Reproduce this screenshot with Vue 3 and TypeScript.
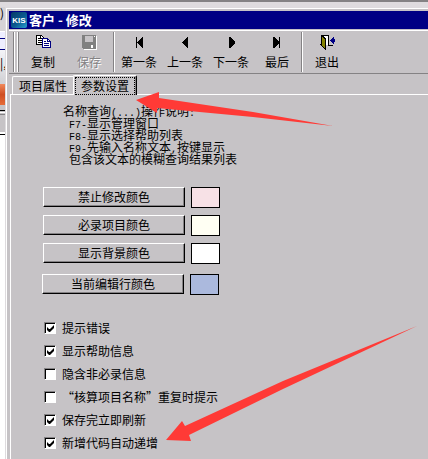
<script setup lang="ts">
import { ref } from 'vue'

interface Tool {
  id: string
  label: string
  disabled?: boolean
}

const toolGroups: Tool[][] = [
  [
    { id: 'copy', label: '复制' },
    { id: 'save', label: '保存', disabled: true },
  ],
  [
    { id: 'first', label: '第一条' },
    { id: 'prev', label: '上一条' },
    { id: 'next', label: '下一条' },
    { id: 'last', label: '最后' },
  ],
  [{ id: 'exit', label: '退出' }],
]

const tabs = ['项目属性', '参数设置']
const activeTab = ref(1)

const colors = [
  { label: '禁止修改颜色', value: '#f7e1e6' },
  { label: '必录项目颜色', value: '#fffff3' },
  { label: '显示背景颜色', value: '#ffffff' },
  { label: '当前编辑行颜色', value: '#abb9dd' },
]

const options = ref([
  { label: '提示错误', checked: true },
  { label: '显示帮助信息', checked: true },
  { label: '隐含非必录信息', checked: false },
  { label: '“核算项目名称”重复时提示', checked: false },
  { label: '保存完立即刷新', checked: true },
  { label: '新增代码自动递增', checked: true },
])
</script>

<template>
  <div class="desktop">
    <div class="owner-edge"></div>
    <div class="owner-side" aria-hidden="true">
      <div class="side-title">)</div>
      <div class="side-menu"></div>
      <div class="side-tool">|,</div>
      <div class="side-orange"></div>
      <div class="side-bar"></div>
    </div>

    <main class="dialog">
      <header class="title-bar">
        <svg class="logo" width="16" height="16" viewBox="0 0 16 16">
          <defs>
            <linearGradient id="kis" x1="0" y1="0" x2="1" y2="1">
              <stop offset="0" stop-color="#063a66" />
              <stop offset="0.55" stop-color="#0b5a91" />
              <stop offset="1" stop-color="#2aa0d0" />
            </linearGradient>
          </defs>
          <rect width="16" height="16" rx="2" fill="url(#kis)" />
          <text x="8" y="11" text-anchor="middle" class="logo-text">KIS</text>
        </svg>
        <h1>客户 - 修改</h1>
      </header>

      <nav class="toolbar">
        <span class="grip"></span>
        <div v-for="(group, g) in toolGroups" :key="g" class="tool-group">
          <button v-for="tool in group" :key="tool.id" type="button" class="tool" :disabled="tool.disabled">
            <svg width="16" height="16" viewBox="0 0 16 16" shape-rendering="crispEdges">
              <template v-if="tool.id === 'copy'">
                <path d="M1.500 1.500h5l2 2v7h-7z" fill="#fff" stroke="#000" />
                <path d="M5.500 2v2h3M3 4.500h2M3 6.500h4M3 8.500h4" fill="none" stroke="#000" />
                <path d="M7.500 4.500h5l3 3v6h-8z" fill="#fff" stroke="#000080" />
                <path d="M12.500 4.500v3h3M9 7.500h2M9 9.500h5M9 11.500h5" fill="none" stroke="#000080" />
              </template>
              <template v-else-if="tool.id === 'save'">
                <path d="M2 2h14v14H3v-1h12V3z" fill="#fff" />
                <path d="M1 1h14v14H2l-1-1z" fill="#808080" />
                <path d="M4 2h8v6H4z" fill="#c6c3c6" />
                <path d="M13 2h1v1h-1z" fill="#fff" />
                <path d="M10 11h2v3h-2z" fill="#fff" />
              </template>
              <template v-else-if="tool.id === 'first'">
                <path d="M5 3h1v11H5z" />
                <path d="M12 3v11h-1L6 9V8l5-5z" />
              </template>
              <path v-else-if="tool.id === 'prev'" d="M11 3v11h-1L5 9V8l5-5z" />
              <path v-else-if="tool.id === 'next'" d="M6 3v11h1l5-5V8L7 3z" />
              <template v-else-if="tool.id === 'last'">
                <path d="M4 3v11h1l5-5V8L5 3z" />
                <path d="M10 3h1v11h-1z" />
              </template>
              <template v-else>
                <path d="M3 1h7v10H3z" fill="#fff" />
                <path d="M2 1h8v10h4v1H9V2H3v9H1v-1h1z" />
                <path d="M3 2l3 3v10l-3-3z" fill="#848200" />
                <path d="M2 1h1l4 4v11H6V6L3 3v9l3 3v1l-4-4z" />
                <path d="M11 6l3-3h1v2h1v3h-1v2h-1l-3-3z" fill="#000084" />
              </template>
            </svg>
            <span>{{ tool.label }}</span>
          </button>
        </div>
      </nav>

      <div class="tabs" role="tablist">
        <button
          v-for="(tab, i) in tabs"
          :key="tab"
          type="button"
          role="tab"
          class="tab"
          :class="{ active: activeTab === i }"
          :aria-selected="activeTab === i"
          @click="activeTab = i"
        >
          <span>{{ tab }}</span>
        </button>
      </div>

      <section class="panel">
        <div class="notes">
          <p>名称查询<span class="half">(...)</span>操作说明<span class="half">:</span></p>
          <ul>
            <li><span class="half">F7-</span>显示管理窗口</li>
            <li><span class="half">F8-</span>显示选择帮助列表</li>
            <li><span class="half">F9-</span>先输入名称文本<span class="half">,</span>按键显示</li>
            <li>包含该文本的模糊查询结果列表</li>
          </ul>
        </div>

        <div class="colors">
          <div v-for="color in colors" :key="color.label" class="color-row">
            <button type="button" class="push">{{ color.label }}</button>
            <span class="swatch" :style="{ background: color.value }"></span>
          </div>
        </div>

        <div class="options">
          <label v-for="option in options" :key="option.label" class="option">
            <input v-model="option.checked" type="checkbox" />
            <span>{{ option.label }}</span>
          </label>
        </div>
      </section>
    </main>

    <svg class="arrows" width="428" height="459" viewBox="0 0 428 459" aria-hidden="true">
      <polygon points="136,100 159,92 159,98 253,112 333,126 253,117 157,108 157,113" />
      <polygon points="166,440 182,421 185,426 283,381 417,326 283,389 189,435 191,441" />
    </svg>
  </div>
</template>

<style>
body {
  margin: 0;
  background: #c6c3c6;
}
</style>

<style scoped>
.desktop {
  position: relative;
  display: grid;
  grid-template-columns: 5px minmax(0, 1fr);
  grid-template-rows: 7px auto;
  min-height: 100vh;
  overflow: hidden;
  background: #fff;
  color: #000;
  font: 12px/12px "Noto Sans CJK SC", sans-serif;
}

button {
  margin: 0;
  padding: 0;
  border: 0;
  background: none;
  color: inherit;
  font: inherit;
}

.owner-edge {
  grid-column: 1 / -1;
  border-top: 2px solid #848284;
  background: #dedbde;
}

.owner-side {
  overflow: hidden;
}

.side-title {
  height: 24px;
  background: #d6d3d6;
  line-height: 12px;
}

.side-menu {
  box-sizing: border-box;
  height: 19px;
  border-top: 1px solid #fff;
  border-bottom: 1px solid #000080;
  background: linear-gradient(#eef 6px, #000080 6px, #000080 7px, #eef 7px);
}

.side-tool {
  height: 34px;
  background: linear-gradient(#f4f4f8, #d0d0d4);
  line-height: 26px;
}

.side-orange {
  height: 21px;
  background: linear-gradient(#f08a5c, #cf4e22 50%, #e66c38);
}

.side-bar {
  box-sizing: border-box;
  height: 30px;
  border-top: 5px solid #c6c3c6;
  border-bottom: 1px solid #000;
  background: linear-gradient(#000 1px, #c6c3c6 1px, #c6c3c6 2px, #fff 2px, #fff 3px, #c6c3c6 3px, #c6c3c6 4px, #848284 4px, #848284 5px, #c6c3c6 5px, #c6c3c6 22px, #fff 22px);
}

.dialog {
  display: flex;
  flex-direction: column;
  border-top: 1px solid #dedbde;
  border-left: 1px solid #dedbde;
  background: #c6c3c6;
  box-shadow: inset 1px 1px #fff;
  padding: 3px 0 0 3px;
}

.title-bar {
  display: flex;
  align-items: center;
  gap: 2px;
  height: 18px;
  padding-left: 2px;
  background: #000084;
  color: #fff;
}

.logo-text {
  fill: #fff;
  font: bold 8px "Liberation Sans", sans-serif;
}

h1 {
  margin: 0;
  font-size: 13px;
  line-height: 18px;
  font-weight: 700;
  white-space: pre;
}

.toolbar {
  display: flex;
  height: 41px;
  margin-top: 1px;
  padding: 1px 0 0 4px;
  border-top: 1px solid #fff;
  border-bottom: 1px solid #848284;
}

.grip {
  box-sizing: border-box;
  width: 6px;
  height: 40px;
  border: solid #848284;
  border-width: 0 1px;
  background: linear-gradient(90deg, #fff 1px, #c6c3c6 1px, #c6c3c6 3px, #fff 3px);
}

.tool-group {
  display: flex;
  height: 40px;
  padding-left: 1px;
}

.tool-group + .tool-group {
  margin-left: 1px;
  padding-left: 2px;
  border-left: 1px solid #848284;
  box-shadow: inset 1px 0 #fff;
}

.tool {
  display: flex;
  flex-direction: column;
  align-items: center;
  gap: 6px;
  width: 46px;
  padding-top: 2px;
  white-space: nowrap;
}

.tool:disabled {
  color: #848284;
  text-shadow: 1px 1px #fff;
}

.tabs {
  display: flex;
  align-items: flex-end;
  height: 20px;
  padding-left: 3px;
}

.tab {
  box-sizing: border-box;
  height: 18px;
  padding: 0 6px;
  border-top: 1px solid #fff;
  border-left: 1px solid #fff;
  border-top-left-radius: 2px;
  line-height: 18px;
}

.tab.active {
  height: 20px;
  margin-bottom: -1px;
  padding: 0 1px;
  border-right: 1px solid #000;
  border-top-right-radius: 2px;
  background: #c6c3c6;
  box-shadow: inset -1px 0 #848284;
  z-index: 1;
}

.tab.active span {
  display: block;
  height: 16px;
  padding: 0 5px;
  border: 1px dotted #000;
  line-height: 16px;
}

.panel {
  flex: 1;
  border-top: 1px solid #fff;
  border-left: 1px solid #fff;
  margin-left: 1px;
  padding: 10px 8px 9px 31px;
}

.notes {
  padding-left: 21px;
  white-space: nowrap;
}

.notes p,
.notes ul {
  margin: 0;
  padding: 0;
  list-style: none;
}

.notes ul {
  padding-left: 6px;
}

.half {
  font: 10px/0 "Liberation Mono", monospace;
}

.colors {
  display: flex;
  flex-direction: column;
  gap: 7px;
  margin-top: 22px;
}

.color-row {
  display: flex;
  gap: 6px;
  padding-left: 1px;
}

.color-row:last-child {
  margin-top: 3px;
  padding-left: 0;
}

.push {
  box-sizing: border-box;
  width: 142px;
  height: 20px;
  border: 1px solid;
  border-color: #fff #000 #000 #fff;
  box-shadow: inset -1px -1px #848284;
  line-height: 18px;
}

.swatch {
  box-sizing: border-box;
  width: 29px;
  height: 21px;
  border: 1px solid #000;
}

.options {
  display: flex;
  flex-direction: column;
  gap: 11px;
  margin-top: 27px;
  padding-left: 2px;
}

.option {
  display: flex;
  align-items: center;
  gap: 6px;
  height: 12px;
  white-space: nowrap;
}

.option input {
  appearance: none;
  box-sizing: border-box;
  width: 12px;
  height: 12px;
  margin: 0;
  padding: 1px;
  border: 1px solid;
  border-color: #848284 #fff #fff #848284;
  background: #fff;
  box-shadow: inset 1px 1px #000;
}

.option input:checked::before {
  content: "";
  display: block;
  width: 7px;
  height: 7px;
  margin: 1px;
  background: #000;
  clip-path: polygon(0 2px, 2px 4px, 3px 4px, 7px 0, 7px 3px, 3px 7px, 2px 7px, 0 5px);
}

.arrows {
  position: absolute;
  top: 0;
  left: 0;
  fill: #ff3a36;
  pointer-events: none;
}
</style>
